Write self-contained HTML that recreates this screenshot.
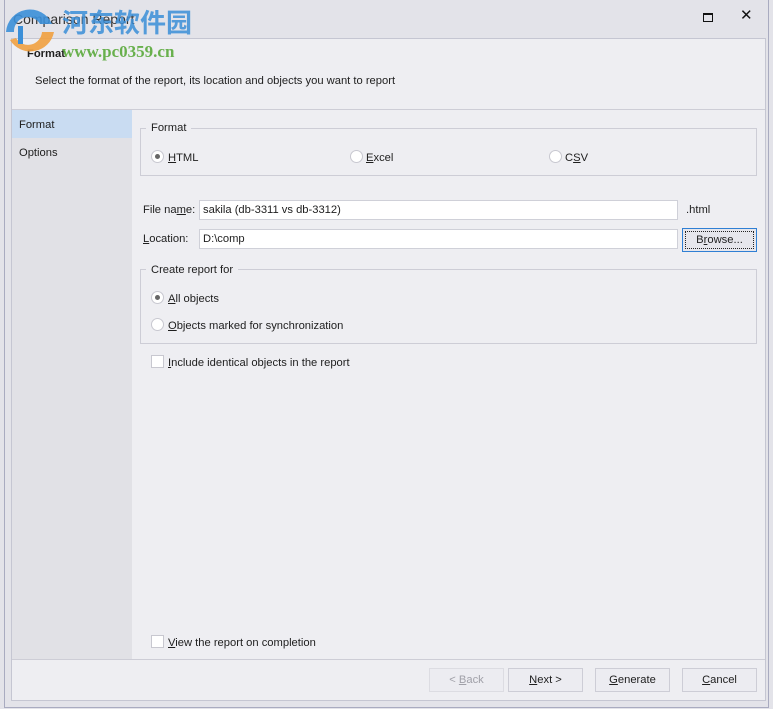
<!DOCTYPE html>
<html><head><meta charset="utf-8"><style>
*{margin:0;padding:0;box-sizing:border-box}
body{width:773px;height:709px;background:#e3e3e9;font-family:"Liberation Sans","Noto Sans CJK SC",sans-serif;font-size:11.2px;line-height:16px;color:#1e1e1e;position:relative;overflow:hidden}
.a{position:absolute}
u{text-decoration:underline}
.radio{position:absolute;width:13px;height:13px;border-radius:50%;background:#fff;border:1px solid #c8c8d0}
.radio.on::after{content:"";position:absolute;left:3px;top:3px;width:5px;height:5px;border-radius:50%;background:#666}
.chk{position:absolute;width:13px;height:13px;background:#fff;border:1px solid #c8c8d0}
.inp{position:absolute;background:#fff;border:1px solid #cfd0d8;height:20px;padding:1px 0 0 3px}
.btn{position:absolute;border:1px solid #cdcdd6;background:#ececf1;height:24px;text-align:center;line-height:23px}
.grp{position:absolute;border:1px solid #cdcdd6}
.legend{position:absolute;background:#eeeef2;padding:0 5px}
</style></head><body>
<div class="a" style="left:4px;top:0;width:765px;height:708px;border-left:1px solid #a9abc0;border-right:1px solid #a9abc0;border-bottom:1px solid #a9abc0"></div>
<div class="a" style="left:13px;top:10px;font-size:14px;line-height:18px;color:#333">Comparison Report</div>
<div class="a" style="left:703px;top:13px;width:10px;height:9px;border:1px solid #111;border-top-width:2px"></div>
<div class="a" style="left:740px;top:8px;font-size:15px;color:#111">✕</div>
<div class="a" style="left:11px;top:38px;width:755px;height:663px;background:#eeeef2;border:1px solid #c5c6d2"></div>
<div class="a" style="left:27px;top:46px;font-weight:bold">Format</div>
<div class="a" style="left:35px;top:73px">Select the format of the report, its location and objects you want to report</div>
<div class="a" style="left:12px;top:109px;width:753px;height:1px;background:#cdcdd6"></div>
<div class="a" style="left:12px;top:110px;width:120px;height:549px;background:#e1e1e6"></div>
<div class="a" style="left:12px;top:110px;width:120px;height:28px;background:#c9dcf2"></div>
<div class="a" style="left:19px;top:117px">Format</div>
<div class="a" style="left:19px;top:145px">Options</div>

<div class="grp" style="left:140px;top:128px;width:617px;height:48px"></div>
<div class="legend" style="left:146px;top:120px">Format</div>
<div class="radio on" style="left:151px;top:150px"></div><div class="a" style="left:168px;top:150px"><u>H</u>TML</div>
<div class="radio" style="left:350px;top:150px"></div><div class="a" style="left:366px;top:150px"><u>E</u>xcel</div>
<div class="radio" style="left:549px;top:150px"></div><div class="a" style="left:565px;top:150px">C<u>S</u>V</div>

<div class="a" style="left:143px;top:202px">File na<u>m</u>e:</div>
<div class="inp" style="left:199px;top:200px;width:479px">sakila (db-3311 vs db-3312)</div>
<div class="a" style="left:686px;top:202px">.html</div>
<div class="a" style="left:143px;top:231px"><u>L</u>ocation:</div>
<div class="inp" style="left:199px;top:229px;width:479px">D:\comp</div>
<div class="btn" style="left:682px;top:228px;width:75px;border:1px solid #2f7fd4;background:#e6e6ec"><div style="position:absolute;inset:2px;border:1px dotted #222"></div>B<u>r</u>owse...</div>

<div class="grp" style="left:140px;top:269px;width:617px;height:75px"></div>
<div class="legend" style="left:146px;top:262px">Create report for</div>
<div class="radio on" style="left:151px;top:291px"></div><div class="a" style="left:168px;top:291px"><u>A</u>ll objects</div>
<div class="radio" style="left:151px;top:318px"></div><div class="a" style="left:168px;top:318px"><u>O</u>bjects marked for synchronization</div>
<div class="chk" style="left:151px;top:355px"></div><div class="a" style="left:168px;top:355px"><u>I</u>nclude identical objects in the report</div>
<div class="chk" style="left:151px;top:635px"></div><div class="a" style="left:168px;top:635px"><u>V</u>iew the report on completion</div>

<div class="a" style="left:12px;top:659px;width:753px;height:1px;background:#cdcdd6"></div>
<div class="btn" style="left:429px;top:668px;width:75px;color:#a0a0a8;border-color:#dcdce2">&lt; <u>B</u>ack</div>
<div class="btn" style="left:508px;top:668px;width:75px"><u>N</u>ext &gt;</div>
<div class="btn" style="left:595px;top:668px;width:75px"><u>G</u>enerate</div>
<div class="btn" style="left:682px;top:668px;width:75px"><u>C</u>ancel</div>

<svg class="a" style="left:0;top:2px" width="60" height="56"><path d="M6 30 A24 24 0 0 1 52 22 L40 22 A14 14 0 0 0 14 30 Z" fill="#3b8fd8" opacity=".9"/><path d="M10 38 A24 24 0 0 0 54 30 L42 30 A14 14 0 0 1 16 36 Z" fill="#f0a040" opacity=".9"/><rect x="18" y="24" width="5" height="18" fill="#3b8fd8"/></svg>
<div class="a" style="left:62px;top:6px;font-size:26px;font-weight:bold;color:#3b8fd8;opacity:.85;font-family:'Noto Sans CJK SC',sans-serif;line-height:32px">河东软件园</div>
<div class="a" style="left:62px;top:42px;font-size:17px;line-height:20px;font-weight:bold;color:#5aaa3c;opacity:.9;font-family:'Liberation Serif',serif">www.pc0359.cn</div>
</body></html>
